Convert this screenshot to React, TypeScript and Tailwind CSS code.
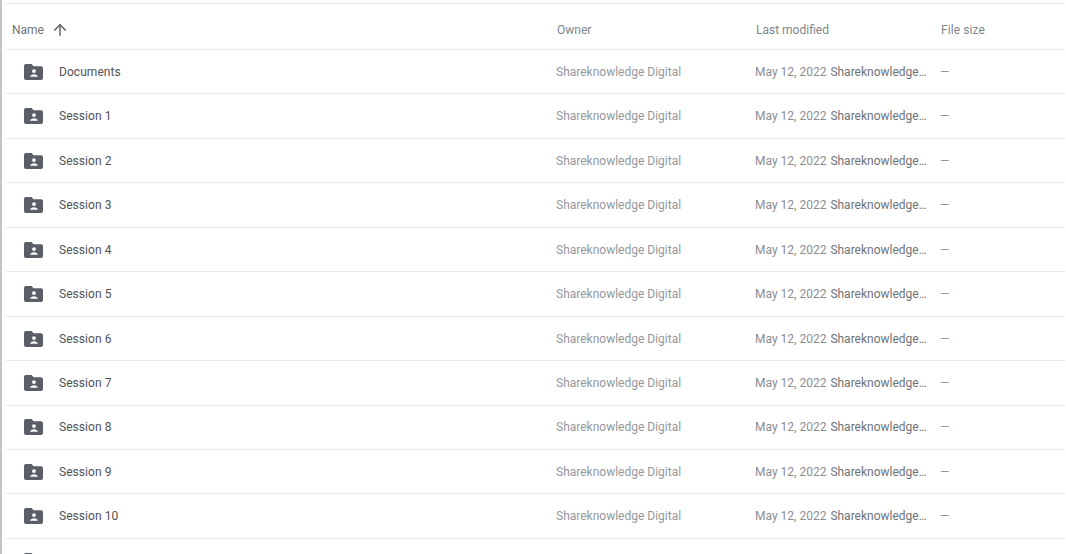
import { ArrowUp } from "lucide-react";

const rows = [
  "Documents",
  "Session 1",
  "Session 2",
  "Session 3",
  "Session 4",
  "Session 5",
  "Session 6",
  "Session 7",
  "Session 8",
  "Session 9",
  "Session 10",
  "Session 11",
];

function SharedFolder() {
  return (
    <svg viewBox="0 0 20 17" preserveAspectRatio="none" className="h-4 w-[19px] shrink-0" fill="#5a5e66">
      <path d="M2 0h6l2 2.5h8a2 2 0 0 1 2 2V15a2 2 0 0 1-2 2H2a2 2 0 0 1-2-2V2a2 2 0 0 1 2-2z" />
      <circle cx="10.5" cy="7.5" r="2" fill="#fff" />
      <path d="M6.5 13.5c0-1.8 2.2-2.7 4-2.7s4 .9 4 2.7z" fill="#fff" />
    </svg>
  );
}

export default function App() {
  return (
    <div className="h-[554px] w-[1066px] overflow-hidden bg-white font-['Roboto',sans-serif] text-[12px]">
      <div className="flex h-full border-l-2 border-[#c4c4c4]">
        <div className="w-[1063px] pl-1">
          <div className="mt-[3px] flex h-[47px] items-center border-y border-[#e8e8ea] pt-[6px] text-[#80868b]">
            <div className="flex w-[550px] items-center pl-[6px]">
              <span className="text-[#6f7378]">Name</span>
              <ArrowUp className="ml-[7px] h-[18px] w-[18px] text-[#5f6368]" strokeWidth={2} />
            </div>
            <div className="w-[199px] pl-px">Owner</div>
            <div className="w-[185px] pl-px">Last modified</div>
            <div className="pl-px tracking-[0.1px]">File size</div>
          </div>
          {rows.map((name) => (
            <div key={name} className="flex h-[44.44px] items-center border-b border-[#e8e8ea] pt-[0.5px]">
              <div className="flex w-[550px] items-center pl-[18px]">
                <SharedFolder />
                <span className="ml-[16px] tracking-[0.05px] text-[#4f5357]">{name}</span>
              </div>
              <div className="w-[199px] text-[#94989d]">Shareknowledge Digital</div>
              <div className="flex w-[185px] items-center">
                <span className="text-[#8a8e93]">May 12, 2022</span>
                <span className="ml-1 w-[98px] truncate text-[#6f7378]">Shareknowledge Digital</span>
              </div>
              <div className="text-[#94989d]">—</div>
            </div>
          ))}
        </div>
      </div>
    </div>
  );
}
